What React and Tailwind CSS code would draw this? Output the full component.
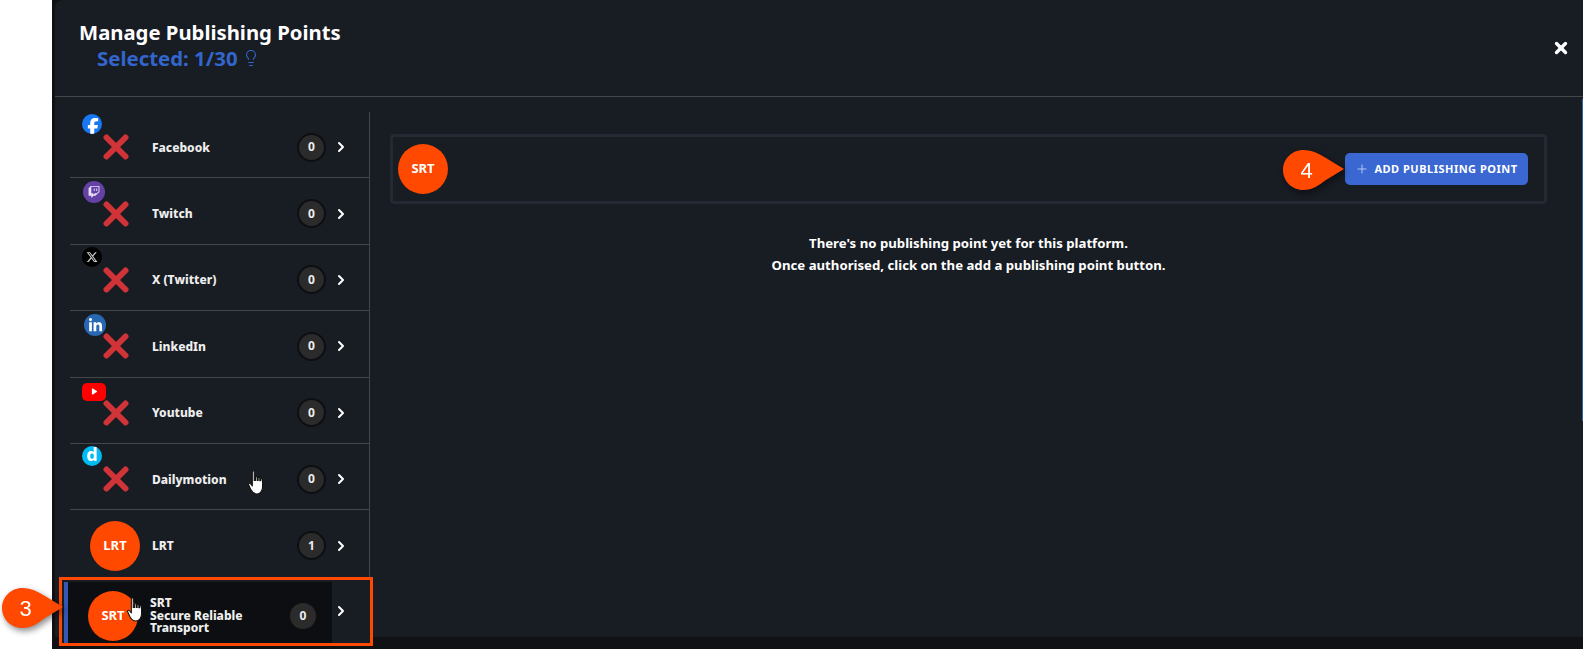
import React from 'react';
import { ChevronRight, Lightbulb, Plus, X } from 'lucide-react';
import { FaFacebookF, FaLinkedinIn, FaPlay, FaTwitch, FaXTwitter } from 'react-icons/fa6';

const platforms = [
    { name: 'Facebook', count: 0, badge: 'facebook' },
    { name: 'Twitch', count: 0, badge: 'twitch' },
    { name: 'X (Twitter)', count: 0, badge: 'x' },
    { name: 'LinkedIn', count: 0, badge: 'linkedin' },
    { name: 'Youtube', count: 0, badge: 'youtube' },
    { name: 'Dailymotion', count: 0, badge: 'dailymotion' },
];

function Badge({ type }) {
    if (type === 'facebook') {
        return (
            <div className="absolute left-[12px] top-[2px] w-5 h-5 rounded-full bg-[#1877f2] flex items-end justify-center overflow-hidden text-white">
                <FaFacebookF className="w-[16px] h-[18px] translate-x-[1px] translate-y-[2px]" />
            </div>
        );
    }
    if (type === 'twitch') {
        return (
            <div className="absolute left-[13px] top-[3px] w-[22px] h-[22px] rounded-full bg-[#6441a5] flex items-center justify-center text-[#e8e0f5]">
                <FaTwitch className="w-3 h-3" />
            </div>
        );
    }
    if (type === 'x') {
        return (
            <div className="absolute left-[12px] top-[2px] w-5 h-5 rounded-full bg-black flex items-center justify-center text-[#cfcfcf]">
                <FaXTwitter className="w-3 h-3" />
            </div>
        );
    }
    if (type === 'linkedin') {
        return (
            <div className="absolute left-[14px] top-[3px] w-[22px] h-[22px] rounded-full bg-[#2867b2] flex items-center justify-center text-white">
                <FaLinkedinIn className="w-[15px] h-[15px]" />
            </div>
        );
    }
    if (type === 'youtube') {
        return (
            <div className="absolute left-[12px] top-[5px] w-6 h-[18px] rounded-[5px] bg-[#ff0000] flex items-center justify-center text-white">
                <FaPlay className="w-[7px] h-[7px]" />
            </div>
        );
    }
    return (
        <div className="absolute left-[12px] top-[2px] w-5 h-5 rounded-full bg-[#00bcf2] flex items-center justify-center">
            <span className="text-white font-bold text-[18px] leading-[20px] -mt-[3px]">d</span>
        </div>
    );
}

function RedCross() {
    return (
        <svg viewBox="0 0 26 26" className="w-[26px] h-[26px]">
            <path d="M3.5 3.5 L22.5 22.5 M22.5 3.5 L3.5 22.5" stroke="#d13438" strokeWidth="6" strokeLinecap="round" />
        </svg>
    );
}

function Count({ value }) {
    return (
        <div className="w-[29px] h-[29px] shrink-0 rounded-full bg-[#2b2b2b] border-2 border-[#0d0f12] flex items-center justify-center text-[12px] font-bold text-[#eeeeee]">
            {value}
        </div>
    );
}

function HandCursor({ className }) {
    return (
        <svg viewBox="0 0 18 24" className={className}>
            <path
                d="M5 1.5 C5 .6 6.8 .6 6.8 1.5 L6.8 10 L8 10 L8 7 C8 6.2 9.6 6.2 9.6 7 L9.6 10 L10.6 10 L10.6 7.6 C10.6 6.8 12.2 6.8 12.2 7.6 L12.2 10.4 L13.2 10.4 L13.2 8.8 C13.2 8 14.8 8 14.8 8.8 L14.8 16 C14.8 20 12.6 23 9.4 23 C6.4 23 5 21.4 3.4 18.4 L1.4 14 C1 13 2.4 12.2 3.2 13.2 L5 15.4 Z"
                fill="#ffffff"
                stroke="#111111"
                strokeWidth="1"
                strokeLinejoin="round"
            />
        </svg>
    );
}

function Callout({ label, className }) {
    return (
        <div className={`absolute w-[62px] h-[42px] drop-shadow-[2px_3px_3px_rgba(0,0,0,0.45)] ${className}`}>
            <svg viewBox="0 0 62 42" className="absolute inset-0 w-full h-full">
                <path d="M21 1 C31 1 37 5 44 9 L62 20 L44 31 C37 36 31 41 21 41 C10 41 1 32 1 21 C1 10 10 1 21 1 Z" fill="#ff4800" />
            </svg>
            <span className="absolute left-0 top-0 w-[49px] h-[42px] flex items-center justify-center text-white text-[22px] font-['Liberation_Sans',sans-serif]">
                {label}
            </span>
        </div>
    );
}

function PlatformRow({ item }) {
    return (
        <div className="relative h-[66.4px] pt-[5px] flex items-center border-b border-[#444649]">
            <Badge type={item.badge} />
            <div className="w-[82px] flex justify-end pr-[23px] shrink-0">
                <RedCross />
            </div>
            <div className="flex-1 pt-[1px] text-[12px] font-extrabold text-[#eeeeee]">{item.name}</div>
            <Count value={item.count} />
            <ChevronRight className="w-4 h-4 ml-[7px] mr-[20px] text-white" strokeWidth={3} />
        </div>
    );
}

export default function App() {
    return (
        <div className="relative w-full h-[649px] flex bg-white overflow-hidden font-['Noto_Sans','Open_Sans',sans-serif]">
            <div className="w-[52px] shrink-0 bg-white" />
            <div className="flex-1 bg-[#0f1114] pl-[3px] pb-[12px] flex flex-col">
                <div className="flex-1 rounded-tl-[8px] bg-[#181c23] flex flex-col min-h-0">
                    <header className="h-[97px] shrink-0 border-b border-[#444649] flex justify-between items-center pl-[24px] pr-[13px]">
                        <div className="-mt-[7px]">
                            <h1 className="text-[20.3px] leading-[26px] font-bold text-white">Manage Publishing Points</h1>
                            <div className="pl-[18px] flex items-center gap-[4px] text-[20.4px] leading-[26px] font-bold text-[#3366cc]">
                                Selected: 1/30
                                <Lightbulb className="w-[18px] h-[18px]" strokeWidth={1.5} />
                            </div>
                        </div>
                        <X className="w-[18px] h-[18px] text-white" strokeWidth={4.5} />
                    </header>

                    <div className="flex-1 flex min-h-0 pt-[15px]">
                        <aside className="w-[315px] shrink-0 pl-[15px] border-r border-[#444649]">
                            {platforms.map((item) => (
                                <PlatformRow key={item.name} item={item} />
                            ))}
                            <div className="h-[66px] pt-[5px] flex items-center">
                                <div className="w-[82px] shrink-0 flex justify-end pr-[12px]">
                                    <div className="w-[50px] h-[50px] rounded-full bg-[#ff4800] flex items-center justify-center text-white text-[13px] font-bold">LRT</div>
                                </div>
                                <div className="flex-1 text-[12px] font-extrabold text-[#eeeeee]">LRT</div>
                                <Count value={1} />
                                <ChevronRight className="w-4 h-4 ml-[7px] mr-[20px] text-white" strokeWidth={3} />
                            </div>
                        </aside>

                        <main className="flex-1 pt-[22px] pl-[20px] pr-[36px]">
                            <div className="h-[70px] rounded-[4px] border-[3px] border-[#232a34] flex items-center justify-between pl-[5px] pr-[16px]">
                                <div className="w-[50px] h-[50px] rounded-full bg-[#ff4800] flex items-center justify-center text-white text-[13px] font-bold">SRT</div>
                                <button className="w-[183px] h-[32px] rounded-[5px] bg-[#3a67d1] flex items-center justify-center gap-[5px] text-white text-[11px] font-bold tracking-[0.5px]">
                                    <Plus className="w-[14px] h-[14px] text-[#c5d2f2]" strokeWidth={1.5} />
                                    ADD PUBLISHING POINT
                                </button>
                            </div>
                            <div className="mt-[28px] text-center text-[13.2px] leading-[22px] font-bold text-white">
                                <p>There's no publishing point yet for this platform.</p>
                                <p>Once authorised, click on the add a publishing point button.</p>
                            </div>
                        </main>
                    </div>
                </div>
            </div>

            <div className="absolute right-0 top-[99px] w-px h-[322px] bg-[#2f66a8]" />

            {/* Highlighted SRT row with annotation frame */}
            <div className="absolute left-[59px] top-[577px] w-[314px] h-[69px] border-[3px] border-[#ff4800] bg-[#181c23] pt-[2px] pl-[2px] flex">
                <div className="w-[4px] shrink-0 bg-[#3558b5]" />
                <div className="w-[264px] shrink-0 bg-[#0c0e12] flex items-center pl-[20px] pt-[7px]">
                    <div className="w-[50px] h-[50px] rounded-full bg-[#ff4800] flex items-center justify-center text-white text-[13px] font-bold shrink-0">SRT</div>
                    <div className="ml-[12px] w-[140px] shrink-0 text-[12px] leading-[12.5px] font-extrabold text-[#eeeeee]">
                        SRT<br />Secure Reliable<br />Transport
                    </div>
                    <div className="w-[26px] h-[26px] shrink-0 rounded-full bg-[#2b2b2b] flex items-center justify-center text-[12px] font-bold text-[#eeeeee]">0</div>
                </div>
                <div className="flex-1 flex items-center pl-[1px] pb-[3px]">
                    <ChevronRight className="w-4 h-4 text-white" strokeWidth={3} />
                </div>
            </div>

            <HandCursor className="absolute left-[247px] top-[470px] w-[19px] h-[25px]" />
            <HandCursor className="absolute left-[126px] top-[597px] w-[19px] h-[25px]" />

            <Callout label="3" className="left-[1px] top-[587px]" />
            <Callout label="4" className="left-[1282px] top-[149px]" />
        </div>
    );
}
